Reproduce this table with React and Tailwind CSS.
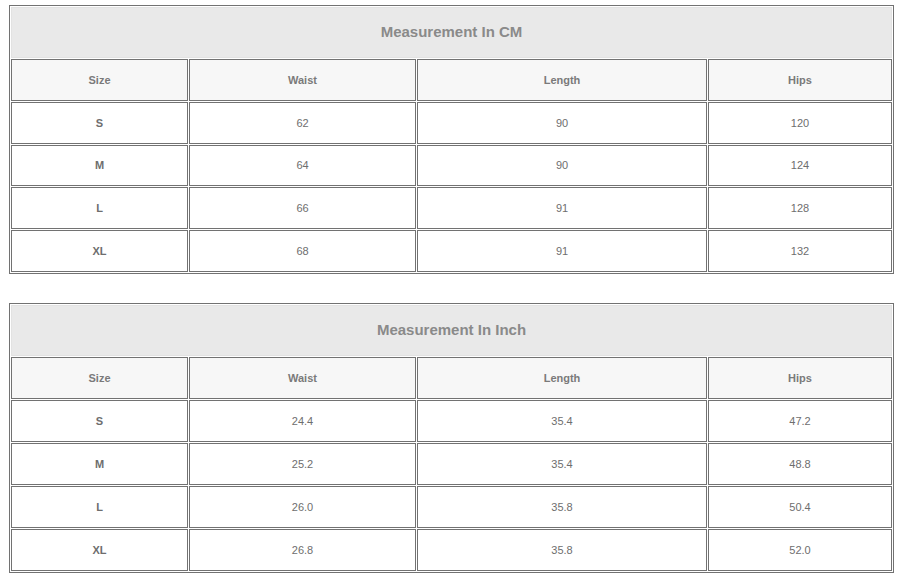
import React from "react";

const cm = [
  ["S", "62", "90", "120"],
  ["M", "64", "90", "124"],
  ["L", "66", "91", "128"],
  ["XL", "68", "91", "132"],
];
const inch = [
  ["S", "24.4", "35.4", "47.2"],
  ["M", "25.2", "35.4", "48.8"],
  ["L", "26.0", "35.8", "50.4"],
  ["XL", "26.8", "35.8", "52.0"],
];

function SizeTable({ title, rows, rowH }) {
  return (
    <table className="w-[885px] table-fixed border-separate border-spacing-[1px] border border-[#727272] bg-white">
      <colgroup>
        <col className="w-[177px]" />
        <col className="w-[227px]" />
        <col className="w-[290px]" />
        <col className="w-[184px]" />
      </colgroup>
      <tbody>
        <tr>
          <td
            colSpan={4}
            className="h-[51px] border border-[#e2e2e2] bg-[#e9e9e9] text-center text-[15px] font-bold text-[#8a8a8a]"
          >
            {title}
          </td>
        </tr>
        <tr>
          {["Size", "Waist", "Length", "Hips"].map((h) => (
            <td
              key={h}
              className="h-[42px] border border-[#727272] bg-[#f7f7f7] text-center text-[11px] font-bold text-[#7a7a7a]"
            >
              {h}
            </td>
          ))}
        </tr>
        {rows.map((r) => (
          <tr key={r[0]} className={rowH}>
            {r.map((v, i) => (
              <td
                key={i}
                className={
                  "border border-[#727272] bg-white text-center text-[11px] text-[#6e6e6e] " +
                  (i === 0 ? "font-bold" : "font-normal")
                }
              >
                {v}
              </td>
            ))}
          </tr>
        ))}
      </tbody>
    </table>
  );
}

export default function App() {
  return (
    <div className="min-h-[581px] w-[907px] bg-white pl-[9px] pt-[5px] font-['Liberation_Sans',Arial,sans-serif]">
      <div className="flex flex-col gap-[29px]">
        <SizeTable title="Measurement In CM" rows={cm} rowH="h-[41.7px]" />
        <SizeTable title="Measurement In Inch" rows={inch} rowH="h-[42px]" />
      </div>
    </div>
  );
}
